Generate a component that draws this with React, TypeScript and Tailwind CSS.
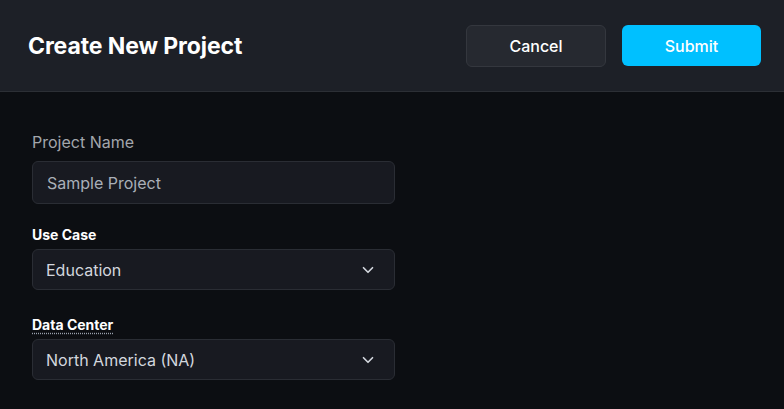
import React, { useState } from "react";
import { ChevronDown } from "lucide-react";

const font = { fontFamily: "Inter, 'Noto Sans', sans-serif" };

const SelectField = ({ label, value, dotted }: { label: string; value: string; dotted?: boolean }) => (
  <div className="flex flex-col">
    <label
      className={`text-[14px] leading-[18px] font-bold text-white mb-[5px] w-fit ${
        dotted ? "underline decoration-dotted decoration-gray-400 underline-offset-[3px]" : ""
      }`}
    >
      {label}
    </label>
    <button className="flex items-center justify-between h-[41px] w-[363px] pl-[13px] pr-[17px] rounded-md border border-[#2a2d34] bg-[#181a21] text-[16px] text-[#d3d7de]">
      <span>{value}</span>
      <ChevronDown className="w-[18px] h-[18px] text-[#d3d7de]" strokeWidth={2.25} />
    </button>
  </div>
);

const App = () => {
  const [name, setName] = useState("Sample Project");

  return (
    <div className="w-[784px] h-[409px] bg-[#0c0e12] overflow-hidden" style={font}>
      <header className="h-[92px] flex items-center justify-between pl-[28px] pr-[23px] bg-[#1d2027] border-b border-[#2c2f35]">
        <h1 className="text-[23px] font-bold text-white tracking-[-0.1px] pt-[2px]">Create New Project</h1>
        <div className="flex items-center gap-[16px]">
          <button className="w-[140px] h-[42px] rounded-md border border-[#34373e] bg-[#262930] text-[16px] font-medium text-white">
            Cancel
          </button>
          <button className="w-[139px] h-[41px] rounded-md bg-[#00c0ff] text-[16px] font-medium text-white">
            Submit
          </button>
        </div>
      </header>

      <div className="px-[32px] pt-[39px] flex flex-col">
        <label className="text-[16px] leading-[22px] text-[#a3a6ac] mb-[8px]">Project Name</label>
        <input
          value={name}
          onChange={(e) => setName(e.target.value)}
          className="h-[43px] w-[363px] px-[14px] rounded-md border border-[#2a2d34] bg-[#181a21] text-[16px] text-[#a9afb8] outline-none"
        />
        <div className="mt-[22px]">
          <SelectField label="Use Case" value="Education" />
        </div>
        <div className="mt-[26px]">
          <SelectField label="Data Center" value="North America (NA)" dotted />
        </div>
      </div>
    </div>
  );
};

export default App;
